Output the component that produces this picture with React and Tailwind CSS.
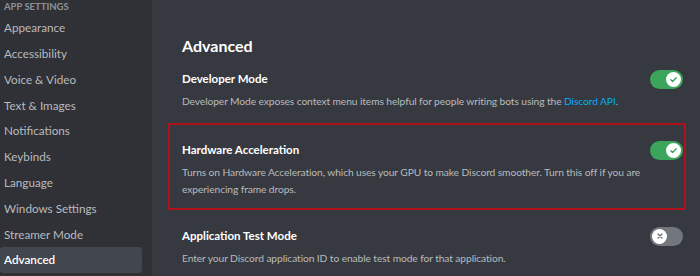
import { useState } from "react";

const navItems = [
  "Appearance",
  "Accessibility",
  "Voice & Video",
  "Text & Images",
  "Notifications",
  "Keybinds",
  "Language",
  "Windows Settings",
  "Streamer Mode",
  "Advanced",
];

function Toggle({ on }) {
  return (
    <div
      className={
        "flex h-[19px] w-[33px] shrink-0 items-center rounded-full px-[2px] " +
        (on ? "justify-end bg-[#3ba55c]" : "justify-start bg-[#72767d]")
      }
    >
      <div className="flex h-[15px] w-[15px] items-center justify-center rounded-full bg-white">
        {on ? (
          <svg width="9" height="9" viewBox="0 0 20 20" fill="none">
            <path d="M4 10.5l4 4 8-8.5" stroke="#3ba55c" strokeWidth="3" strokeLinecap="round" strokeLinejoin="round" />
          </svg>
        ) : (
          <svg width="8" height="8" viewBox="0 0 20 20" fill="none">
            <path d="M5 5l10 10M15 5L5 15" stroke="#72767d" strokeWidth="3.5" strokeLinecap="round" />
          </svg>
        )}
      </div>
    </div>
  );
}

function Setting({ title, children, on }) {
  return (
    <div>
      <div className="flex h-[22px] items-center justify-between">
        <span className="text-[11.5px] font-bold text-white">{title}</span>
        <Toggle on={on} />
      </div>
      <div className="mt-[3px] text-[10.25px] leading-[17px] tracking-[-0.1px] text-[#b9bbbe]">{children}</div>
    </div>
  );
}

export default function App() {
  const [selected, setSelected] = useState("Advanced");

  return (
    <div className="flex h-[276px] w-[700px] overflow-hidden bg-[#36393f] font-['Lato',sans-serif]">
      <nav className="w-[152px] shrink-0 bg-[#2f3136] pr-[10px]">
        <div className="flex h-[15px] items-center pl-[4px] text-[9.5px] font-bold uppercase text-[#8e9297]">
          App Settings
        </div>
        {navItems.map((item) => (
          <div
            key={item}
            onClick={() => setSelected(item)}
            className={
              "flex h-[25.8px] items-center rounded-[3px] pl-[4px] text-[11.7px] " +
              (selected === item ? "bg-[#42464d] font-semibold text-white" : "text-[#b9bbbe]")
            }
          >
            {item}
          </div>
        ))}
      </nav>

      <main className="flex-1 pl-[30px] pr-[17px]">
        <h2 className="mt-[34px] flex h-[24px] items-center text-[16px] font-bold text-white">Advanced</h2>

        <div className="mt-[10px]">
          <Setting title="Developer Mode" on>
            Developer Mode exposes context menu items helpful for people writing bots using the{" "}
            <span className="text-[#00aff4]">Discord API</span>.
          </Setting>
        </div>

        <div className="ml-[-14px] mr-[-3px] mt-[13px] border-2 border-[#b0121b] pb-[10px] pl-[12px] pr-[1px] pt-[14px]">
          <Setting title="Hardware Acceleration" on>
            Turns on Hardware Acceleration, which uses your GPU to make Discord smoother. Turn this off if you are
            <br />
            experiencing frame drops.
          </Setting>
        </div>

        <div className="mt-[15px]">
          <Setting title="Application Test Mode">
            Enter your Discord application ID to enable test mode for that application.
          </Setting>
        </div>
      </main>
    </div>
  );
}
